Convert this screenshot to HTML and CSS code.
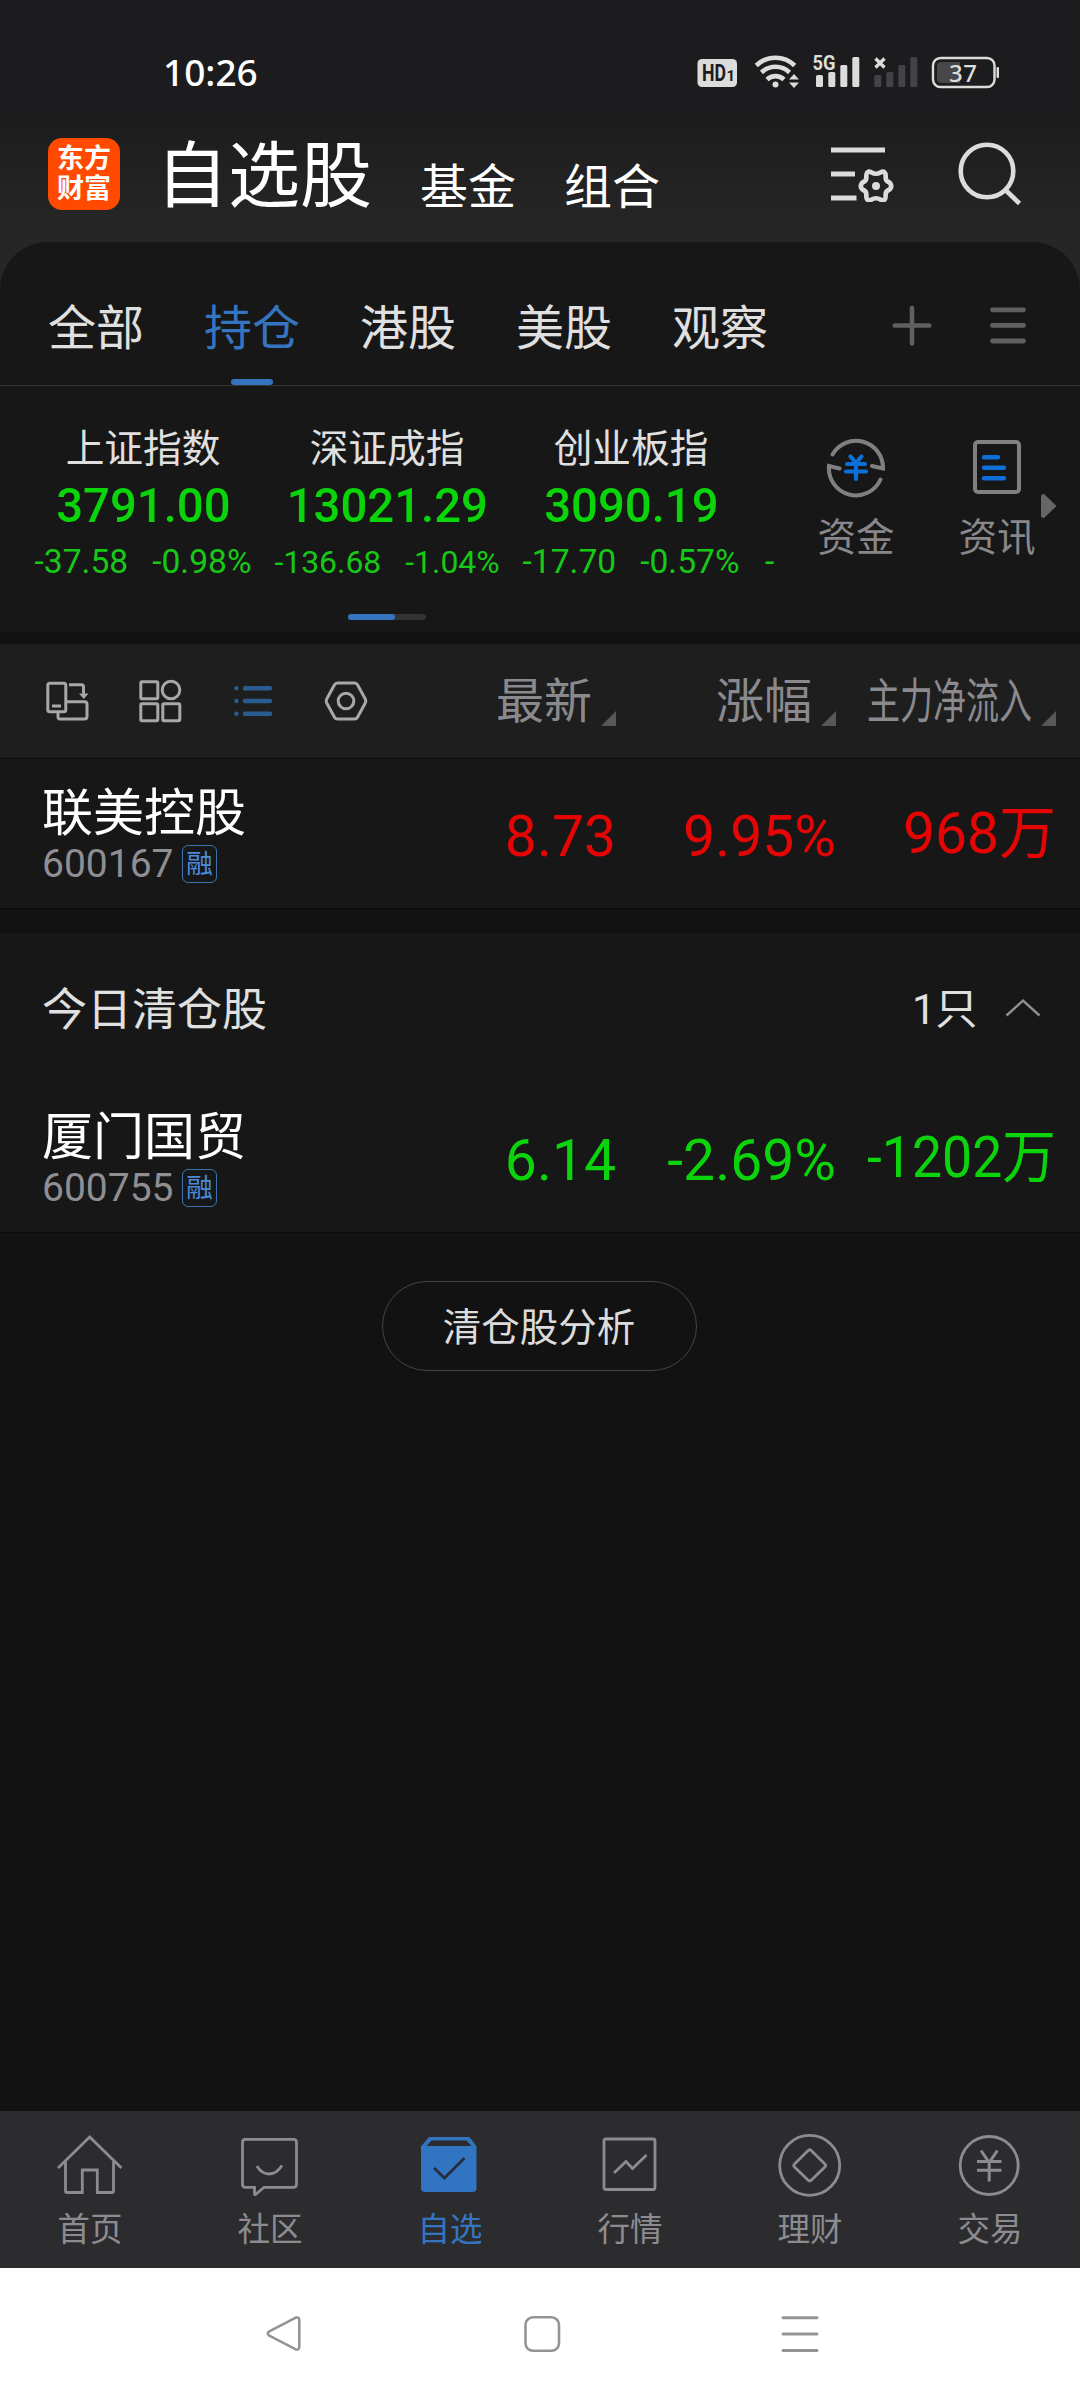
FILE: index.html
```html
<!DOCTYPE html>
<html lang="zh-CN">
<head>
<meta charset="utf-8">
<title>自选股</title>
<link rel="stylesheet" href="styles.css">
</head>
<body>
<div class="screen">
  <header class="top">
    <div class="status">
      <span class="clock">10:26</span>
      <svg class="status-icons" width="306" height="38" viewBox="696 52 306 38">
        <rect x="697.5" y="59" width="39.5" height="28" rx="4.5" fill="#dcdcdc"/>
        <text x="702" y="81" class="hd" textLength="24" lengthAdjust="spacingAndGlyphs">HD</text>
        <text x="726.500" y="81" class="hd-sub">1</text>
        <g fill="none" stroke="#dcdcdc" stroke-width="4.600">
          <path d="M756.300 65.500a27.500 27.500 0 0 1 38.400 0"/>
          <path d="M761.500 72.500a20 20 0 0 1 28 0"/>
          <path d="M767 79.500a12.500 12.500 0 0 1 17 0"/>
        </g>
        <g fill="#dcdcdc">
          <circle cx="775.500" cy="84.500" r="3"/>
          <path d="M789 79.500l5-5.500 5 5.500zM789 82.500l5 5.500 5-5.500z"/>
          <rect x="816" y="75" width="7" height="12" rx="1.500"/>
          <rect x="828.300" y="72" width="7" height="15" rx="1.500"/>
          <rect x="840.300" y="65" width="7" height="22" rx="1.500"/>
          <rect x="852.300" y="57" width="7" height="30" rx="1.500"/>
        </g>
        <text x="812.500" y="70" class="net" textLength="23" lengthAdjust="spacingAndGlyphs">5G</text>
        <path d="M875.500 58.500l9 9M884.500 58.500l-9 9" stroke="#dcdcdc" stroke-width="3.200" fill="none"/>
        <g fill="#434345">
          <rect x="874.300" y="75" width="7" height="12" rx="1.500"/>
          <rect x="886.300" y="72" width="7" height="15" rx="1.500"/>
          <rect x="898.300" y="65" width="7" height="22" rx="1.500"/>
          <rect x="910.300" y="57" width="7" height="30" rx="1.500"/>
        </g>
        <rect x="933" y="58" width="61.500" height="29" rx="7.500" fill="none" stroke="#dcdcdc" stroke-width="2.400"/>
        <path d="M941 62h19v21h-19a4 4 0 0 1-4-4v-13a4 4 0 0 1 4-4z" fill="#48484a"/>
        <rect x="996.500" y="67" width="2.500" height="11" rx="1" fill="#dcdcdc"/>
        <text x="949" y="81.500" class="batt" textLength="28">37</text>
      </svg>
    </div>
    <div class="brand-bar">
      <div class="logo"><span>东方</span><span>财富</span></div>
      <h1 class="title">自选股</h1>
      <span class="sub first">基金</span>
      <span class="sub">组合</span>
      <svg class="filter" width="66" height="60" viewBox="828 142 66 60">
        <path d="M831 150h54M831 174h24M831 198h25.500" stroke="#dcdcdc" stroke-width="5" fill="none"/>
        <g transform="translate(876 186)">
          <path d="M13.500 3.500Q9 5.200 9.700 9.900Q9.500 16.200 4.500 13.600Q0 11 -4.500 13.600Q-9.500 16.200 -9.700 9.900Q-9 5.200 -13.500 3.500Q-17 0 -13.500 -3.500Q-9 -5.200 -9.700 -9.900Q-9.500 -16.200 -4.500 -13.600Q0 -11 4.500 -13.600Q9.500 -16.200 9.700 -9.900Q9 -5.200 13.500 -3.500Q17 0 13.500 3.500z" fill="none" stroke="#dcdcdc" stroke-width="4.600"/>
          <circle r="4" fill="#dcdcdc"/>
        </g>
      </svg>
      <svg class="search" width="70" height="68" viewBox="955 138 70 68">
        <circle cx="987" cy="171" r="26.300" fill="none" stroke="#dcdcdc" stroke-width="4.600"/>
        <path d="M1005.500 190l14 13.500" stroke="#dcdcdc" stroke-width="4.600"/>
      </svg>
    </div>
  </header>

  <section class="panel">
    <nav class="tabs">
      <span class="tab">全部</span>
      <span class="tab on">持仓</span>
      <span class="tab">港股</span>
      <span class="tab">美股</span>
      <span class="tab">观察</span>
      <svg class="tab-tools" width="140" height="44" viewBox="890 304 140 44">
        <g stroke="#606060" stroke-linecap="round" fill="none">
          <path d="M894.700 325.500h34.500M912 308v35.500" stroke-width="4.600"/>
          <path d="M992.500 309.800h31M992.500 325.400h31M992.500 341h31" stroke-width="4.800"/>
        </g>
      </svg>
    </nav>
    <div class="market">
      <div class="indices">
        <div class="index"><b class="iname">上证指数</b><span class="ival">3791.00</span><span class="ichg"><i>-37.58</i><i>-0.98%</i></span></div>
        <div class="index"><b class="iname">深证成指</b><span class="ival">13021.29</span><span class="ichg small"><i>-136.68</i><i>-1.04%</i></span></div>
        <div class="index"><b class="iname">创业板指</b><span class="ival">3090.19</span><span class="ichg"><i>-17.70</i><i>-0.57%</i></span></div>
        <div class="index peek"><span class="ichg"><i>-</i></span></div>
      </div>
      <div class="shortcut fund">
        <svg width="64" height="62" viewBox="824 436 64 62">
          <g fill="none" stroke="#808080" stroke-width="4">
            <path d="M832.500 454.500a27 27 0 0 1 50.500 14l-11-2.500" stroke-linecap="round"/>
            <path d="M880.500 479.500a27 27 0 0 1-51.500-13.500l10.500 2.500" stroke-linecap="round"/>
          </g>
          <path d="M850.500 456.500l5.500 6.500 5.500-6.500M847 464h18M846 471.500h20M856 463v16" stroke="#0f6fd8" stroke-width="4.200" stroke-linecap="round" fill="none"/>
        </svg>
        <span>资金</span>
      </div>
      <div class="shortcut news">
        <svg width="64" height="62" viewBox="965 436 64 62">
          <rect x="975" y="442" width="44" height="50" rx="3" fill="none" stroke="#808080" stroke-width="4"/>
          <path d="M984 457.200h14M984 467.800h20M984 478.200h20" stroke="#0f6fd8" stroke-width="4.400" stroke-linecap="round"/>
        </svg>
        <span>资讯</span>
      </div>
      <svg class="more" width="16" height="26" viewBox="1041 493 16 26"><path d="M1041 496.500q0-2.500 3-2.500l11.500 11q1.500 1 0 2l-11.500 11q-3 0-3-2.500z" fill="#666"/></svg>
    </div>
    <div class="pager"><span></span></div>
  </section>

  <section class="toolbar">
    <svg class="tool-icons" width="330" height="46" viewBox="42 678 330 46">
      <g fill="none" stroke="#a8a8a8" stroke-width="3">
        <rect x="47.800" y="683.300" width="18" height="28.500" rx="2"/>
        <path d="M52 706h9" />
        <path d="M66 701.700h18.500q2.500 0 2.500 2.500v12.300q0 2.500-2.500 2.500h-24.500q-2 0-2-2.500v-5"/>
        <path d="M69 684.800h12.500q2 0 2 2v7"/>
        <rect x="140.800" y="681.700" width="17" height="17" rx="1.200"/>
        <rect x="140.800" y="703.700" width="17" height="17" rx="1.200"/>
        <rect x="162.800" y="703.700" width="17" height="17" rx="1.200"/>
        <circle cx="171" cy="690" r="8.800"/>
        <path d="M337.500 683h17q2 0 3 1.800l7.800 14.200q1 2 0 4l-7.800 14.200q-1 1.800-3 1.800h-17q-2 0-3-1.800l-7.800-14.200q-1-2 0-4l7.800-14.200q1-1.800 3-1.800z"/>
        <circle cx="346" cy="701" r="7.800"/>
      </g>
      <path d="M79 693.500h9.500l-4.700 5.500z" fill="#a8a8a8"/>
      <g fill="#2a5c92" stroke="#2a5c92" stroke-width="4.400" stroke-linecap="round">
        <path d="M245 688.300h25M245 701h25M245 713.700h25M236.400 688.300h.01M236.400 701h.01M236.400 713.700h.01"/>
      </g>
    </svg>
    <div class="col c1"><span>最新</span><em></em></div>
    <div class="col c2"><span>涨幅</span><em></em></div>
    <div class="col c3"><span class="narrow">主力净流入</span><em></em></div>
  </section>

  <section class="stock">
    <div class="who"><span class="name">联美控股</span><span class="meta"><span class="code">600167</span><span class="tag">融</span></span></div>
    <span class="num n1 up">8.73</span><span class="num n2 up">9.95%</span><span class="num n3 up">968万</span>
  </section>

  <section class="cleared">
    <div class="cleared-head">
      <span class="label">今日清仓股</span>
      <span class="count">1只</span>
      <svg width="36" height="20" viewBox="1005 998 36 20"><path d="M1006.500 1015.500l16.500-15 16.500 15" fill="none" stroke="#8e8e93" stroke-width="2.400"/></svg>
    </div>
    <div class="stock">
      <div class="who"><span class="name">厦门国贸</span><span class="meta"><span class="code">600755</span><span class="tag">融</span></span></div>
      <span class="num n1 down">6.14</span><span class="num n2 down">-2.69%</span><span class="num n3 down"><span class="squeeze">-1202万</span></span>
    </div>
  </section>

  <main class="rest"><button class="analyse">清仓股分析</button></main>

  <footer class="nav">
    <div class="item">
      <svg width="72" height="66" viewBox="54 2132 72 66"><g fill="none" stroke="#8c8c90" stroke-width="2.800"><path d="M58 2168l31.700-31 31.700 31" /><path d="M65.500 2161.500v29.500q0 1.500 1.500 1.500h15.300v-22.500h15v22.500h14.700q1.500 0 1.500-1.500v-29.500"/></g></svg>
      <span>首页</span>
    </div>
    <div class="item">
      <svg width="72" height="66" viewBox="234 2132 72 66"><g fill="none" stroke="#8c8c90" stroke-width="2.800"><path d="M245.500 2139.300h48q3 0 3 3v42q0 3-3 3h-29.500l-8.500 7.200q-1 .4-1-1v-6.200h-9q-3 0-3-3v-42q0-3 3-3z"/><path d="M256.800 2166q5 8 12.400 8t12.800-8.500"/></g></svg>
      <span>社区</span>
    </div>
    <div class="item on">
      <svg width="72" height="66" viewBox="414 2132 72 66"><path d="M430 2137h38q1.500 0 2.500 1.200l6 8.300v41.500q0 4-4 4h-47.500q-4 0-4-4v-41.500l7-8.300q1-1.200 2-1.200z" fill="#3174c2"/><path d="M431.500 2140.500h35l5 5.500h-45z" fill="#2c2c2e"/><path d="M434 2168l10.500 10 20-20" fill="none" stroke="#252e3d" stroke-width="2.800"/></svg>
      <span>自选</span>
    </div>
    <div class="item">
      <svg width="72" height="66" viewBox="594 2132 72 66"><g fill="none" stroke="#8c8c90" stroke-width="2.800"><rect x="604" y="2139" width="51" height="50.500" rx="2"/><path d="M614 2173l12-11.500 6.500 7 14-13.500"/></g></svg>
      <span>行情</span>
    </div>
    <div class="item">
      <svg width="72" height="66" viewBox="774 2132 72 66"><g fill="none" stroke="#8c8c90" stroke-width="2.800"><circle cx="809.700" cy="2165.400" r="30"/><path d="M811.200 2150.500l13.700 13.400q1.500 1.500 0 3l-13.700 13.400q-1.500 1.500-3 0l-13.700-13.400q-1.500-1.500 0-3l13.700-13.400q1.500-1.500 3 0z"/></g></svg>
      <span>理财</span>
    </div>
    <div class="item">
      <svg width="72" height="66" viewBox="954 2132 72 66"><g fill="none" stroke="#8c8c90" stroke-width="2.800"><circle cx="989.200" cy="2165.500" r="29"/><path d="M981 2150.500l8.200 12 8.200-12M989.200 2161.500v20M977 2161.500h24.500M977 2170.300h24.500" stroke-width="3"/></g></svg>
      <span>交易</span>
    </div>
  </footer>

  <div class="system-nav">
    <svg width="558" height="40" viewBox="263 2314 558 40">
      <g fill="none" stroke="#949494" stroke-width="2.600" stroke-linejoin="round">
        <path d="M269.300 2331.300l26-13.500q3.700-1.300 4 2.200v27q-.3 3.500-4 2.200l-26-13.500q-3-2.200 0-4.400z"/>
        <rect x="525.500" y="2317.300" width="33.500" height="33.500" rx="7.500"/>
        <path d="M783 2317.700h34M783 2334h34M783 2350.500h34" stroke-width="3" stroke-linecap="round"/>
      </g>
    </svg>
  </div>
</div>
</body>
</html>
```
FILE: styles.css
```css
* { box-sizing: border-box; margin: 0; padding: 0; }
body { width: 1080px; background: #121212; font-family: Roboto, "Noto Sans CJK SC", sans-serif; color: #e0e0e0; }
svg { display: block; flex: none; }
b, i, em { font-style: normal; font-weight: 400; }
.screen { width: 1080px; height: 2400px; display: flex; flex-direction: column; overflow: hidden; white-space: nowrap; }

.top { flex: none; height: 290px; margin-bottom: -48px; background: linear-gradient(#1c1c1e 110px, #262626 230px); }
.status { height: 138px; display: flex; justify-content: space-between; padding: 52px 78px 0 163px; }
.clock { font: 500 37px/40px "Noto Sans", sans-serif; color: #fff; }
.hd { font: 700 23px Roboto, sans-serif; fill: #1c1c1e; }
.hd-sub { font: 700 15px Roboto, sans-serif; fill: #1c1c1e; }
.net { font: 700 20px Roboto, sans-serif; fill: #dcdcdc; }
.batt { font: 500 24px "Noto Sans", sans-serif; fill: #dcdcdc; }
.brand-bar { display: flex; height: 72px; padding-left: 48px; }
.logo { width: 72px; height: 72px; border-radius: 14px; background: #ff4a00; color: #fff; font-size: 27px; font-weight: 700; line-height: 30px; display: flex; flex-direction: column; align-items: center; padding-top: 6px; }
.title { margin-left: 36px; width: 216px; font-size: 72px; line-height: 77px; font-weight: 400; color: #fff; }
.sub { font-size: 48px; line-height: 50px; margin: 25px 0 0 48px; color: #fff; }
.filter { margin: 4px 0 0 168px; }
.search { margin-left: 61px; }

.panel { flex: none; height: 390px; background: #171717; border-radius: 48px 48px 0 0; margin-bottom: 12px; }
.tabs { height: 144px; padding: 0 0 0 48px; display: flex; gap: 60px; border-bottom: 1px solid #333; }
.tab { position: relative; width: 96px; font-size: 48px; line-height: 50px; padding-top: 62px; }
.tab.on { color: #3575c0; }
.tab.on::after { content: ""; position: absolute; left: 27px; bottom: 0; width: 42px; height: 6px; border-radius: 3px; background: #3575c0; }
.tab-tools { margin: 62px 0 0 62px; }
.market { height: 228px; display: flex; padding-left: 21px; }
.indices { width: 756px; display: flex; overflow: hidden; }
.index { flex: none; width: 244px; display: flex; flex-direction: column; align-items: center; }
.iname { font-size: 38.7px; line-height: 40px; margin-top: 43px; }
.ival { font-size: 49px; font-weight: 500; line-height: 50px; margin-top: 12px; color: #0ad40a; transform: scaleX(.965); }
.ichg { display: flex; gap: 24px; font-size: 33.6px; line-height: 36px; margin-top: 13px; color: #18c818; }
.ichg.small { font-size: 31.9px; line-height: 37px; }
.peek { align-items: flex-start; padding: 145px 0 0 12px; }
.shortcut { width: 64px; display: flex; flex-direction: column; align-items: center; padding-top: 50px; color: #88888c; font-size: 38.5px; line-height: 40px; }
.shortcut span { margin-top: 20px; }
.fund { margin-left: 47px; }
.news { margin-left: 77px; }
.more { margin: 107px 0 0 12px; }
.pager { width: 78px; height: 6px; margin-left: 348px; border-radius: 3px; background: #333; }
.pager span { display: block; width: 47px; height: 6px; border-radius: 3px; background: #3575c0; }

.toolbar { flex: none; height: 115px; background: #1e1e1e; border-bottom: 1px solid #0e0e0e; display: flex; padding: 34px 24px 0 42px; }
.col { display: flex; justify-content: flex-end; height: 48px; color: #8a8a8e; font-size: 48px; line-height: 48px; }
.col em { width: 15px; height: 15px; margin: 33px 0 0 9px; background: #58585a; clip-path: polygon(100% 0, 100% 100%, 0 100%); }
.c1 { width: 244px; }
.c2 { width: 220px; }
.c3 { width: 220px; }
.narrow { width: 165px; transform: scaleX(.6875); transform-origin: left; }

.stock { flex: none; height: 150px; background: #171717; border-bottom: 1px solid #0c0c0c; display: flex; padding: 0 24px 0 42px; }
.who { width: 354px; padding-top: 27px; display: flex; flex-direction: column; }
.name { font-size: 51px; line-height: 56px; color: #fff; }
.meta { display: flex; align-items: flex-start; margin-top: 3px; }
.code { width: 140px; font-size: 39px; line-height: 38px; color: #8e8e93; }
.tag { width: 35px; height: 38px; border: 1px solid #3d72b0; border-radius: 6px; color: #4a8cdc; font-size: 26.500px; line-height: 36px; text-align: center; }
.num { font-size: 57px; line-height: 60px; padding-top: 48px; text-align: right; width: 220px; }
.n3 { padding-top: 45px; }
.up { color: #e60505; }
.down { color: #0cd40c; }
.squeeze { display: inline-block; transform: scaleX(.94); transform-origin: right; }
.cleared { flex: none; margin-top: 24px; height: 300px; background: #171717; }
.cleared-head { height: 150px; display: flex; padding-left: 42px; }
.label { width: 870px; font-size: 45px; line-height: 50px; margin-top: 53px; }
.count { width: 93px; font-size: 42px; line-height: 50px; margin-top: 52px; }
.cleared-head svg { margin-top: 65px; }

.rest { flex: 1; background: #121212; display: flex; justify-content: center; align-items: flex-start; padding: 48px 2px 0 0; }
.analyse { width: 315px; height: 90px; border: 1px solid #444; border-radius: 45px; background: none; color: #dcdcdc; font: 400 38.500px/88px Roboto, "Noto Sans CJK SC", sans-serif; padding-top: 2px; }

.nav { flex: none; height: 157px; background: #2c2c2e; display: grid; grid-template-columns: repeat(6, 180px); }
.item { display: flex; flex-direction: column; align-items: center; padding-top: 21px; color: #8c8c90; font-size: 32.500px; line-height: 40px; }
.item span { margin-top: 12px; }
.item.on { color: #3575c0; }
.system-nav { flex: none; height: 132px; background: #fff; padding: 46px 0 0 263px; }
```
